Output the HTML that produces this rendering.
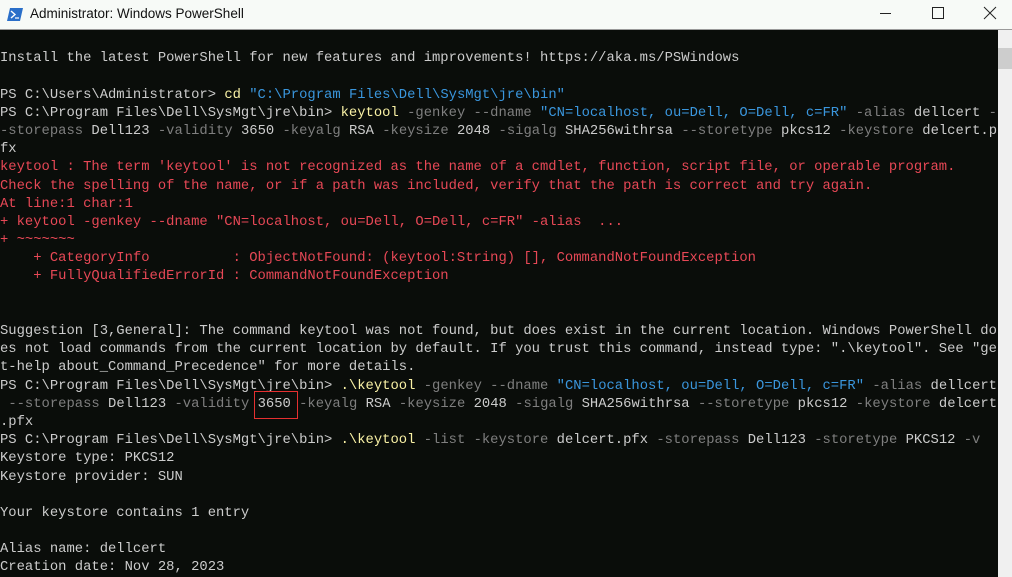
<!DOCTYPE html>
<html><head><meta charset="utf-8"><style>
html,body{margin:0;padding:0;width:1012px;height:577px;overflow:hidden;background:#0c0c0c}
#title{position:absolute;left:0;top:0;width:1012px;height:29px;background:#f7faf7;border-bottom:1px solid #9a9a9a;font-family:"Liberation Sans",sans-serif;font-size:13.5px;color:#111}
#title .t{position:absolute;left:30px;top:6px}
#term{position:absolute;left:0;top:30px;width:998px;height:547px;background:#0a0d0a;overflow:hidden}
pre{margin:0;padding:0;position:absolute;left:0;top:1px;font-family:"Liberation Mono",monospace;font-size:13.85px;line-height:18.18px;color:#cccccc;white-space:pre}
.g{color:#7f7f7f}.y{color:#f9f1a5}.b{color:#3a96dd}.r{color:#e74856}
#sb{position:absolute;left:998px;top:30px;width:14px;height:547px;background:#f0f0f0}
#thumb{position:absolute;left:998px;top:48px;width:14px;height:21px;background:#cdcdcd}
#box{position:absolute;left:254px;top:391px;width:42px;height:26px;border:1px solid #e53030}
</style></head><body>
<div id="title">
<svg style="position:absolute;left:7px;top:8px" width="16" height="13" viewBox="0 0 16 13"><polygon points="3,0 16,0 13,13 0,13" fill="#2a6fc9"/><polyline points="4,3 8,6.5 4,10" fill="none" stroke="#fff" stroke-width="1.4"/><line x1="8" y1="10" x2="12" y2="10" stroke="#fff" stroke-width="1.2"/></svg>
<span class="t">Administrator: Windows PowerShell</span>
<svg style="position:absolute;left:880px;top:6px" width="124" height="16" viewBox="0 0 124 16"><line x1="0" y1="7.5" x2="11" y2="7.5" stroke="#222" stroke-width="1"/><rect x="52.5" y="1.5" width="11" height="11" fill="none" stroke="#222"/><path d="M104 1 L116 13 M116 1 L104 13" stroke="#222" stroke-width="1"/></svg>
</div>
<div id="term"><pre>

Install the latest PowerShell for new features and improvements! https://aka.ms/PSWindows

PS C:\Users\Administrator&gt; <span class="y">cd</span> <span class="b">"C:\Program Files\Dell\SysMgt\jre\bin"</span>
PS C:\Program Files\Dell\SysMgt\jre\bin&gt; <span class="y">keytool</span> <span class="g">-genkey --dname</span> <span class="b">"CN=localhost, ou=Dell, O=Dell, c=FR"</span> <span class="g">-alias</span> dellcert <span class="g">-</span>
<span class="g">-storepass</span> Dell123 <span class="g">-validity</span> 3650 <span class="g">-keyalg</span> RSA <span class="g">-keysize</span> 2048 <span class="g">-sigalg</span> SHA256withrsa <span class="g">--storetype</span> pkcs12 <span class="g">-keystore</span> delcert.p
fx
<span class="r">keytool : The term 'keytool' is not recognized as the name of a cmdlet, function, script file, or operable program.
Check the spelling of the name, or if a path was included, verify that the path is correct and try again.
At line:1 char:1
+ keytool -genkey --dname "CN=localhost, ou=Dell, O=Dell, c=FR" -alias  ...
+ ~~~~~~~
    + CategoryInfo          : ObjectNotFound: (keytool:String) [], CommandNotFoundException
    + FullyQualifiedErrorId : CommandNotFoundException</span>


Suggestion [3,General]: The command keytool was not found, but does exist in the current location. Windows PowerShell do
es not load commands from the current location by default. If you trust this command, instead type: ".\keytool". See "ge
t-help about_Command_Precedence" for more details.
PS C:\Program Files\Dell\SysMgt\jre\bin&gt; <span class="y">.\keytool</span> <span class="g">-genkey --dname</span> <span class="b">"CN=localhost, ou=Dell, O=Dell, c=FR"</span> <span class="g">-alias</span> dellcert
 <span class="g">--storepass</span> Dell123 <span class="g">-validity</span> 3650 <span class="g">-keyalg</span> RSA <span class="g">-keysize</span> 2048 <span class="g">-sigalg</span> SHA256withrsa <span class="g">--storetype</span> pkcs12 <span class="g">-keystore</span> delcert
.pfx
PS C:\Program Files\Dell\SysMgt\jre\bin&gt; <span class="y">.\keytool</span> <span class="g">-list -keystore</span> delcert.pfx <span class="g">-storepass</span> Dell123 <span class="g">-storetype</span> PKCS12 <span class="g">-v</span>
Keystore type: PKCS12
Keystore provider: SUN

Your keystore contains 1 entry

Alias name: dellcert
Creation date: Nov 28, 2023
</pre></div>
<div id="sb"></div><div id="thumb"></div>
<div id="box"></div>
</body></html>
